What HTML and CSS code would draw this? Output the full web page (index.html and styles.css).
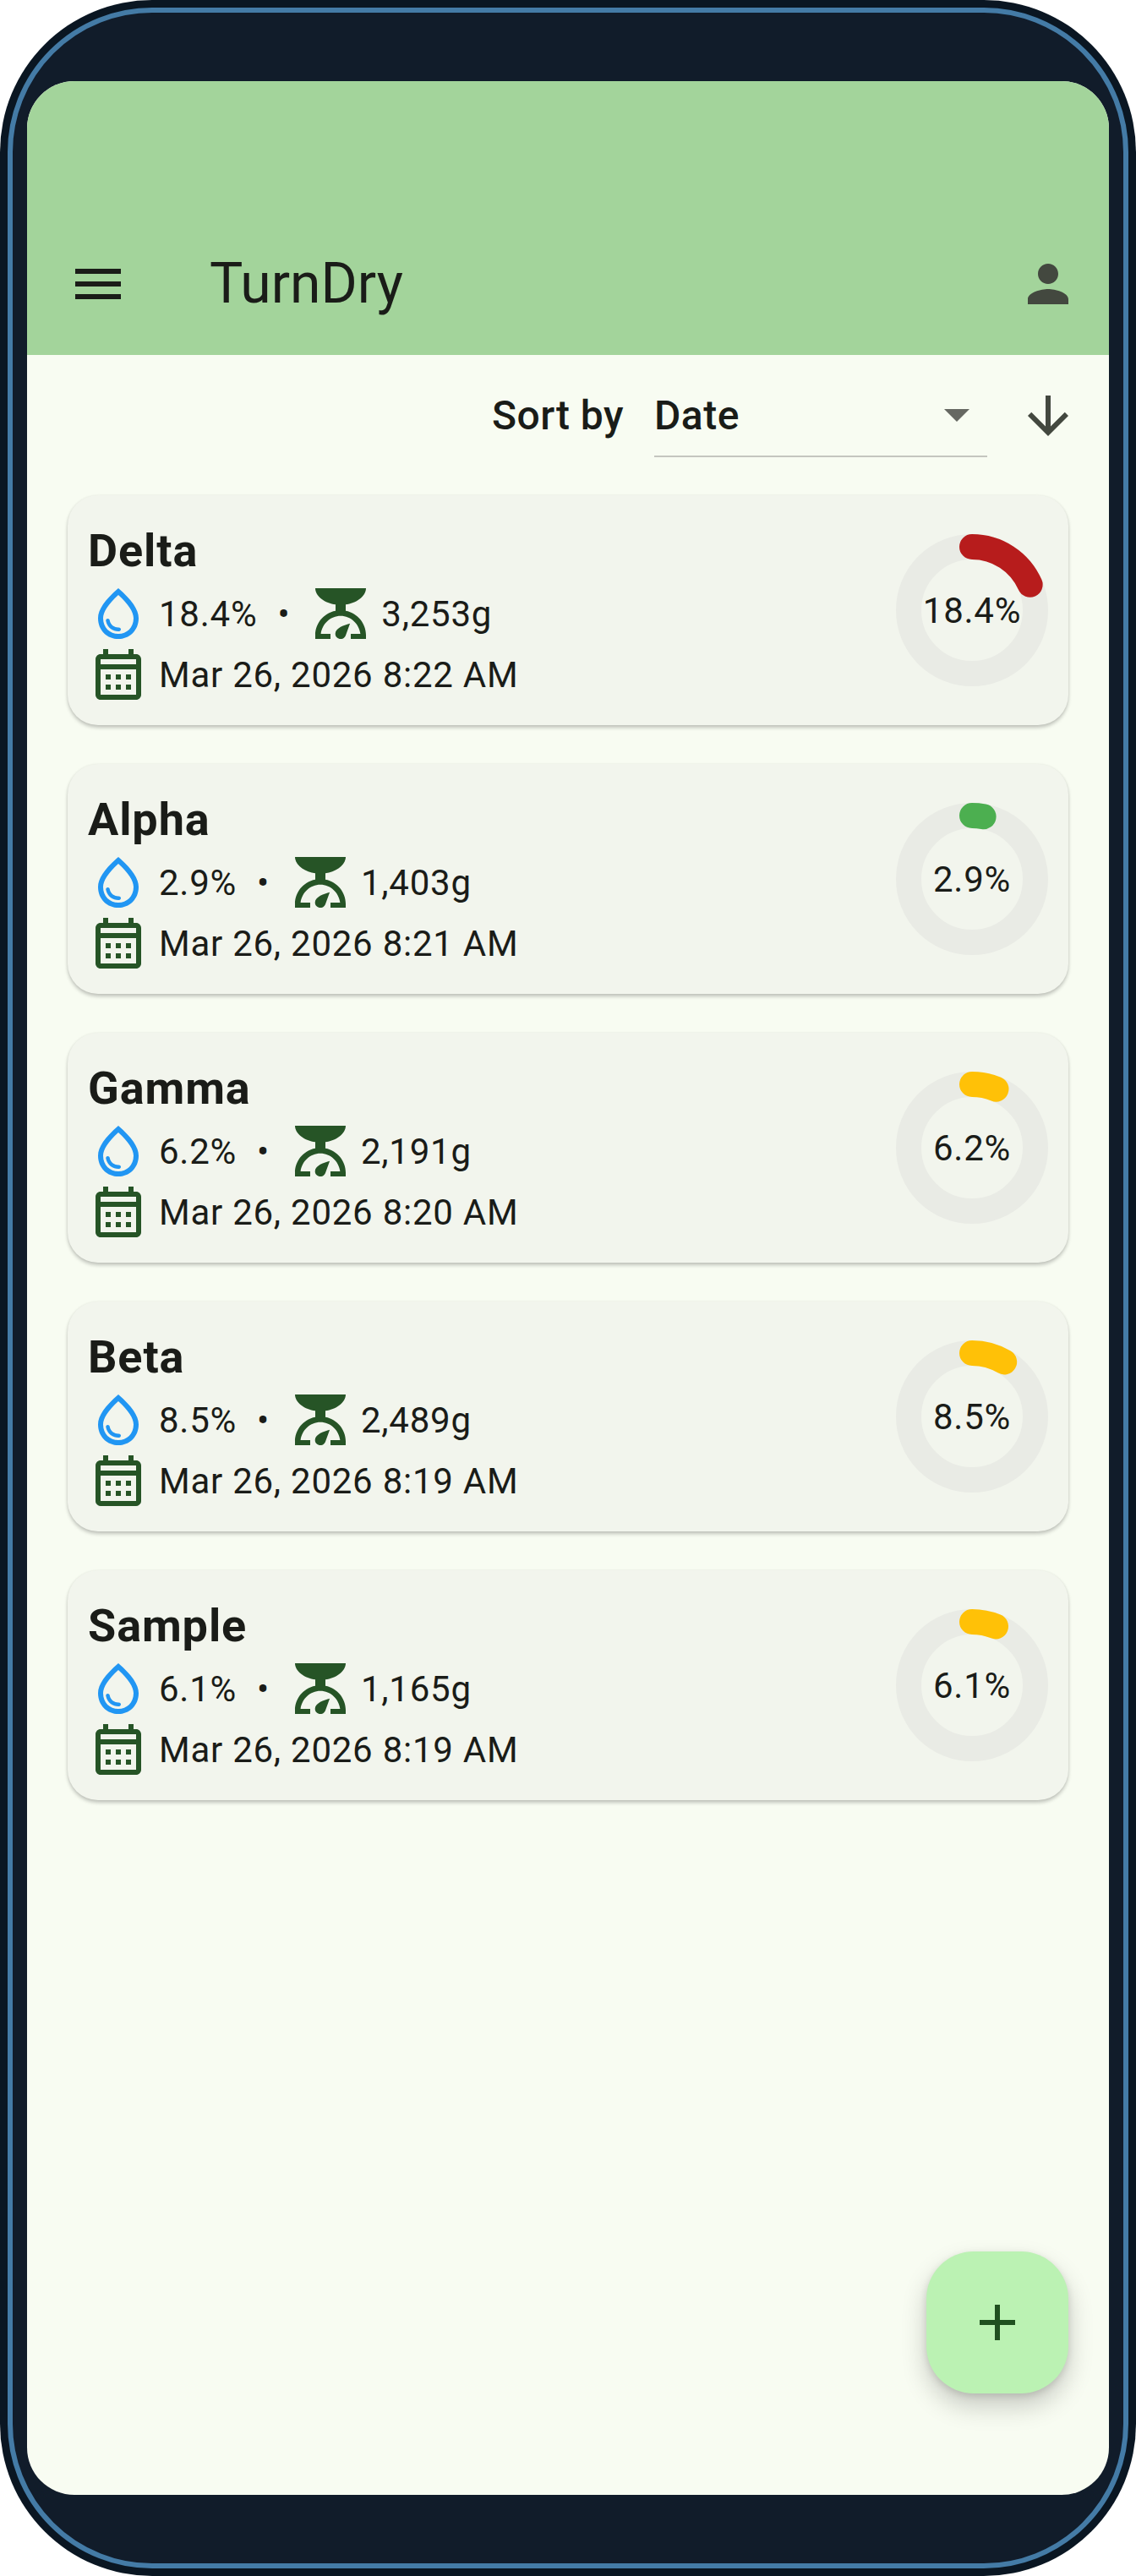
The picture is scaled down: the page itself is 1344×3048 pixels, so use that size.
FILE: index.html
```html
<!DOCTYPE html>
<html lang="en">
<head>
    <meta charset="UTF-8">
    <meta name="viewport" content="width=device-width, initial-scale=1.0">
    <title>TurnDry</title>
    <link rel="stylesheet" href="styles.css">
</head>
<body>
    <svg class="sprites" width="0" height="0" aria-hidden="true">
        <symbol id="i-drop" viewBox="0 0 24 24"><path d="M12 2c-5.33 4.55-8 8.48-8 11.8 0 4.98 3.8 8.2 8 8.2s8-3.22 8-8.2C20 10.48 17.33 6.55 12 2zM12 20c-3.35 0-6-2.57-6-6.2 0-2.34 1.95-5.44 6-9.14 4.05 3.7 6 6.79 6 9.14C18 17.43 15.35 20 12 20zM7.83 14c.37 0 .67.26.74.62.41 2.22 2.28 2.98 3.64 2.87.43-.02.79.32.79.75 0 .4-.32.73-.72.75-2.13.13-4.62-1.09-5.19-4.12C7.01 14.42 7.37 14 7.83 14z"/></symbol>
        <symbol id="i-scale" viewBox="0 0 24 24"><path d="M2 2H22C22 5.2 18 8 14 8.4V10.9C18.8 11.8 22 16 22 20.5V22H16V20H19.8C19.3 16 16 12.9 12 12.9 8 12.9 4.7 16 4.2 20H8V22H2V20.5C2 16 5.2 11.8 10 10.9V8.4C6 8 2 5.2 2 2Z"/><path d="M15.7 15.9C13.5 16.5 10 17.6 9.9 19.9 9.9 21.2 10.9 22 12 22 13.2 22 13.8 21.2 14.1 20.3Z"/></symbol>
        <symbol id="i-calendar" viewBox="0 0 24 24"><path d="M19 4h-1V2h-2v2H8V2H6v2H5c-1.11 0-1.99.9-1.99 2L3 20c0 1.1.89 2 2 2h14c1.1 0 2-.9 2-2V6c0-1.1-.9-2-2-2zm0 16H5V10h14v10zm0-12H5V6h14v2zM9 14H7v-2h2v2zm4 0h-2v-2h2v2zm4 0h-2v-2h2v2zm-8 4H7v-2h2v2zm4 0h-2v-2h2v2zm4 0h-2v-2h2v2z"/></symbol>
    </svg>

    <div class="phone">
        <div class="bezel">
            <div class="screen">
                <header class="app-bar">
                    <svg class="icon" viewBox="0 0 24 24"><path d="M3 18h18v-2H3v2zm0-5h18v-2H3v2zm0-5h18V6H3v2z"/></svg>
                    <h1 class="app-title">TurnDry</h1>
                    <svg class="icon icon-muted" viewBox="0 0 24 24"><path d="M12 12c2.21 0 4-1.79 4-4s-1.79-4-4-4-4 1.79-4 4 1.79 4 4 4zm0 2c-2.67 0-8 1.34-8 4v2h16v-2c0-2.66-5.33-4-8-4z"/></svg>
                </header>

                <div class="sort-row">
                    <span class="sort-label">Sort by</span>
                    <div class="dropdown">
                        <span>Date</span>
                        <span class="caret"></span>
                    </div>
                    <svg class="icon icon-muted" viewBox="0 0 24 24"><path d="M20 12l-1.41-1.41L13 16.17V4h-2v12.17l-5.58-5.59L4 12l8 8 8-8z"/></svg>
                </div>

                <main class="list">
                    <article class="card">
                        <div class="card-body">
                            <h2 class="card-title">Delta</h2>
                            <div class="meta">
                                <svg class="icon icon-drop"><use href="#i-drop"/></svg>
                                <span class="meta-text">18.4%</span>
                                <span class="dot">•</span>
                                <svg class="icon icon-green"><use href="#i-scale"/></svg>
                                <span class="meta-text">3,253g</span>
                            </div>
                            <div class="meta">
                                <svg class="icon icon-green"><use href="#i-calendar"/></svg>
                                <span class="meta-text">Mar 26, 2026 8:22 AM</span>
                            </div>
                        </div>
                        <div class="gauge">
                            <svg viewBox="0 0 180 180"><circle class="track" cx="90" cy="90" r="75"/><circle class="arc arc-red" cx="90" cy="90" r="75" pathLength="100" stroke-dasharray="18.4 100"/></svg>
                            <span class="gauge-text">18.4%</span>
                        </div>
                    </article>

                    <article class="card">
                        <div class="card-body">
                            <h2 class="card-title">Alpha</h2>
                            <div class="meta">
                                <svg class="icon icon-drop"><use href="#i-drop"/></svg>
                                <span class="meta-text">2.9%</span>
                                <span class="dot">•</span>
                                <svg class="icon icon-green"><use href="#i-scale"/></svg>
                                <span class="meta-text">1,403g</span>
                            </div>
                            <div class="meta">
                                <svg class="icon icon-green"><use href="#i-calendar"/></svg>
                                <span class="meta-text">Mar 26, 2026 8:21 AM</span>
                            </div>
                        </div>
                        <div class="gauge">
                            <svg viewBox="0 0 180 180"><circle class="track" cx="90" cy="90" r="75"/><circle class="arc arc-green" cx="90" cy="90" r="75" pathLength="100" stroke-dasharray="2.9 100"/></svg>
                            <span class="gauge-text">2.9%</span>
                        </div>
                    </article>

                    <article class="card">
                        <div class="card-body">
                            <h2 class="card-title">Gamma</h2>
                            <div class="meta">
                                <svg class="icon icon-drop"><use href="#i-drop"/></svg>
                                <span class="meta-text">6.2%</span>
                                <span class="dot">•</span>
                                <svg class="icon icon-green"><use href="#i-scale"/></svg>
                                <span class="meta-text">2,191g</span>
                            </div>
                            <div class="meta">
                                <svg class="icon icon-green"><use href="#i-calendar"/></svg>
                                <span class="meta-text">Mar 26, 2026 8:20 AM</span>
                            </div>
                        </div>
                        <div class="gauge">
                            <svg viewBox="0 0 180 180"><circle class="track" cx="90" cy="90" r="75"/><circle class="arc arc-yellow" cx="90" cy="90" r="75" pathLength="100" stroke-dasharray="6.2 100"/></svg>
                            <span class="gauge-text">6.2%</span>
                        </div>
                    </article>

                    <article class="card">
                        <div class="card-body">
                            <h2 class="card-title">Beta</h2>
                            <div class="meta">
                                <svg class="icon icon-drop"><use href="#i-drop"/></svg>
                                <span class="meta-text">8.5%</span>
                                <span class="dot">•</span>
                                <svg class="icon icon-green"><use href="#i-scale"/></svg>
                                <span class="meta-text">2,489g</span>
                            </div>
                            <div class="meta">
                                <svg class="icon icon-green"><use href="#i-calendar"/></svg>
                                <span class="meta-text">Mar 26, 2026 8:19 AM</span>
                            </div>
                        </div>
                        <div class="gauge">
                            <svg viewBox="0 0 180 180"><circle class="track" cx="90" cy="90" r="75"/><circle class="arc arc-yellow" cx="90" cy="90" r="75" pathLength="100" stroke-dasharray="8.5 100"/></svg>
                            <span class="gauge-text">8.5%</span>
                        </div>
                    </article>

                    <article class="card">
                        <div class="card-body">
                            <h2 class="card-title">Sample</h2>
                            <div class="meta">
                                <svg class="icon icon-drop"><use href="#i-drop"/></svg>
                                <span class="meta-text">6.1%</span>
                                <span class="dot">•</span>
                                <svg class="icon icon-green"><use href="#i-scale"/></svg>
                                <span class="meta-text">1,165g</span>
                            </div>
                            <div class="meta">
                                <svg class="icon icon-green"><use href="#i-calendar"/></svg>
                                <span class="meta-text">Mar 26, 2026 8:19 AM</span>
                            </div>
                        </div>
                        <div class="gauge">
                            <svg viewBox="0 0 180 180"><circle class="track" cx="90" cy="90" r="75"/><circle class="arc arc-yellow" cx="90" cy="90" r="75" pathLength="100" stroke-dasharray="6.1 100"/></svg>
                            <span class="gauge-text">6.1%</span>
                        </div>
                    </article>
                </main>

                <button class="fab" type="button" aria-label="Add">
                    <svg class="icon" viewBox="0 0 24 24"><path d="M19 13h-6v6h-2v-6H5v-2h6V5h2v6h6v2z"/></svg>
                </button>
            </div>
        </div>
    </div>
</body>
</html>
```

FILE: styles.css
```css
body {
    margin: 0;
    background: #fff;
    font-family: Roboto, "Liberation Sans", sans-serif;
    color: #1a1c18;
}
.sprites {
    position: absolute;
}
.phone {
    width: 1344px;
    height: 3048px;
    box-sizing: border-box;
    padding: 9px;
    background: #0a1622;
    border-radius: 180px;
}
.bezel {
    height: 100%;
    box-sizing: border-box;
    padding: 81px 17px;
    background: #111c2a;
    border: 6px solid #447ba6;
    border-radius: 171px;
}
.screen {
    position: relative;
    height: 100%;
    overflow: hidden;
    background: #f8fcf2;
    border-radius: 56px;
}
.icon {
    display: block;
    flex: none;
    width: 72px;
    height: 72px;
    fill: #1a1c18;
}
.icon-muted {
    fill: #43483f;
}
.icon-drop {
    fill: #2196f3;
}
.icon-green {
    fill: #265426;
}

/* app bar */
.app-bar {
    display: flex;
    align-items: center;
    height: 324px;
    box-sizing: border-box;
    padding: 168px 36px 12px 48px;
    background: #a3d49b;
}
.app-title {
    flex: 1;
    margin: -2px 0 0 96px;
    font-size: 66px;
    font-weight: 400;
}

/* sort row */
.sort-row {
    display: flex;
    justify-content: flex-end;
    align-items: flex-start;
    gap: 36px;
    padding: 36px 36px 0 0;
    font-size: 48px;
    font-weight: 500;
    letter-spacing: 0.48px;
}
.sort-label {
    line-height: 72px;
}
.dropdown {
    display: flex;
    justify-content: space-between;
    align-items: center;
    width: 394px;
    box-sizing: border-box;
    height: 85px;
    padding: 0 21px 13px 0;
    border-bottom: 2px solid #c4c6bf;
}
.caret {
    width: 0;
    height: 0;
    border-left: 15px solid transparent;
    border-right: 15px solid transparent;
    border-top: 15px solid #666862;
}

/* cards */
.list {
    display: flex;
    flex-direction: column;
    gap: 46px;
    padding: 45px 48px 0;
}
.card {
    display: flex;
    justify-content: space-between;
    align-items: center;
    padding: 24px;
    background: #f2f5ed;
    border-radius: 36px;
    box-shadow: 0 3px 4px rgba(0, 0, 0, 0.22), 0 0 3px rgba(0, 0, 0, 0.06);
}
.card-title {
    margin: 0;
    padding-top: 3px;
    font-size: 54px;
    line-height: 77px;
    font-weight: 700;
    letter-spacing: 0.9px;
}
.meta {
    display: flex;
    align-items: center;
    height: 72px;
    font-size: 42px;
    letter-spacing: 0.75px;
}
.meta-text {
    margin-left: 12px;
}
.dot {
    margin: 0 24px;
}
.gauge {
    position: relative;
    display: flex;
    justify-content: center;
    align-items: center;
    width: 180px;
    height: 180px;
    font-size: 42px;
    letter-spacing: 0.75px;
}
.gauge svg {
    position: absolute;
    inset: 0;
    transform: rotate(-90deg);
    overflow: visible;
}
.track {
    fill: none;
    stroke: #e9ebe5;
    stroke-width: 30;
}
.arc {
    fill: none;
    stroke-width: 30;
    stroke-linecap: round;
}
.arc-red {
    stroke: #b71c1c;
}
.arc-green {
    stroke: #4caf50;
}
.arc-yellow {
    stroke: #ffc107;
}
.gauge-text {
    position: relative;
}

/* add button */
.fab {
    position: absolute;
    right: 48px;
    bottom: 120px;
    display: flex;
    justify-content: center;
    align-items: center;
    width: 168px;
    height: 168px;
    padding: 0;
    border: none;
    background: #bbf2b3;
    border-radius: 56px;
    box-shadow: 0 15px 30px rgba(0, 0, 0, 0.2), 0 3px 9px rgba(0, 0, 0, 0.12);
}
.fab .icon {
    fill: #205020;
}
```
